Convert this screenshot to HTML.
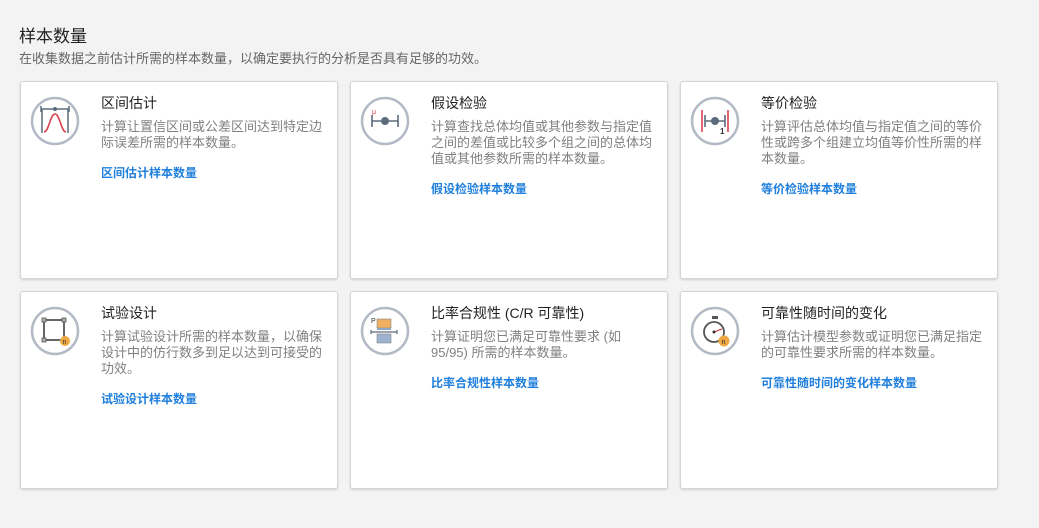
<!DOCTYPE html>
<html><head><meta charset="utf-8"><style>
*{margin:0;padding:0;box-sizing:border-box}
body{width:1039px;height:528px;background:#f3f3f3;font-family:"Liberation Sans","Noto Sans CJK SC",sans-serif;overflow:hidden;position:relative}
h1{position:absolute;left:19px;top:22px;font-size:17px;font-weight:normal;color:#222}
.sub{position:absolute;left:19px;top:48px;font-size:13px;color:#666}
.card{position:absolute;width:318px;height:198px;background:#fff;border:1px solid #d6d6d6;border-radius:3px;box-shadow:0 1px 2px rgba(0,0,0,.15)}
.card svg{position:absolute;left:9px;top:14px}
.t{position:absolute;left:80px;top:11px;font-size:14px;color:#222;white-space:nowrap}
.d{position:absolute;left:80px;top:37px;width:224px;font-size:13px;line-height:16px;color:#808080}
.l{display:block;margin-top:14px;color:#1f7fdc;font-weight:bold;font-size:12px}
</style></head><body>
<h1>样本数量</h1>
<div class="sub">在收集数据之前估计所需的样本数量，以确定要执行的分析是否具有足够的功效。</div>

<div class="card" style="left:20px;top:81px">
<svg width="50" height="50"><circle cx="25" cy="25" r="23" fill="#fff" stroke="#b3bac5" stroke-width="2.5"/>
<path d="M11 13H39M11 10v6M39 10v6M12 13v24M38 13v24" stroke="#5c6b7c" stroke-width="1.5" fill="none"/><circle cx="25" cy="13" r="2" fill="#5c6b7c"/>
<path d="M14 36C19 36 20 18 25 18S31 36 36 36" stroke="#d9424e" stroke-width="1.6" fill="none"/></svg>
<div class="t">区间估计</div>
<div class="d">计算让置信区间或公差区间达到特定边际误差所需的样本数量。<span class="l">区间估计样本数量</span></div></div>

<div class="card" style="left:350px;top:81px">
<svg width="50" height="50"><circle cx="25" cy="25" r="23" fill="#fff" stroke="#b3bac5" stroke-width="2.5"/>
<path d="M12 25H38M12 19v12M38 19v12" stroke="#5c6b7c" stroke-width="1.6"/><circle cx="25" cy="25" r="4" fill="#5c6b7c"/>
<text x="12" y="18" font-size="7" fill="#d9424e" font-family="Liberation Sans">μ</text></svg>
<div class="t">假设检验</div>
<div class="d">计算查找总体均值或其他参数与指定值之间的差值或比较多个组之间的总体均值或其他参数所需的样本数量。<span class="l">假设检验样本数量</span></div></div>

<div class="card" style="left:680px;top:81px">
<svg width="50" height="50"><circle cx="25" cy="25" r="23" fill="#fff" stroke="#b3bac5" stroke-width="2.5"/>
<path d="M12 14v22M38 14v22" stroke="#d9424e" stroke-width="1.6"/><path d="M15 25H35M15 19v12M35 19v12" stroke="#5c6b7c" stroke-width="1.6"/><circle cx="25" cy="25" r="4" fill="#5c6b7c"/>
<text x="30" y="38" font-size="8" font-weight="bold" fill="#333" font-family="Liberation Sans">1</text></svg>
<div class="t">等价检验</div>
<div class="d">计算评估总体均值与指定值之间的等价性或跨多个组建立均值等价性所需的样本数量。<span class="l">等价检验样本数量</span></div></div>

<div class="card" style="left:20px;top:291px">
<svg width="50" height="50"><circle cx="25" cy="25" r="23" fill="#fff" stroke="#b3bac5" stroke-width="2.5"/>
<rect x="14" y="14" width="20" height="20" fill="none" stroke="#333" stroke-width="1.5"/>
<g fill="#aab0a8" stroke="#555" stroke-width=".8"><rect x="12" y="12" width="4" height="4"/><rect x="32" y="12" width="4" height="4"/><rect x="12" y="32" width="4" height="4"/></g>
<circle cx="35" cy="35" r="5" fill="#f0a843"/><text x="32.5" y="38" font-size="7" fill="#333" font-family="Liberation Sans">n</text></svg>
<div class="t">试验设计</div>
<div class="d">计算试验设计所需的样本数量，以确保设计中的仿行数多到足以达到可接受的功效。<span class="l">试验设计样本数量</span></div></div>

<div class="card" style="left:350px;top:291px">
<svg width="50" height="50"><circle cx="25" cy="25" r="23" fill="#fff" stroke="#b3bac5" stroke-width="2.5"/>
<rect x="17" y="13" width="14" height="9" fill="#f0b060" stroke="#888" stroke-width=".6"/>
<rect x="17" y="22" width="14" height="2" fill="#8fa8c8"/>
<path d="M11 26H37M11 24v4M37 24v4" stroke="#5c6b7c" stroke-width="1.2"/>
<rect x="17" y="28" width="14" height="9" fill="#9cb4d0" stroke="#888" stroke-width=".6"/>
<text x="11" y="17" font-size="7" fill="#333" font-family="Liberation Sans">P</text></svg>
<div class="t">比率合规性 (C/R 可靠性)</div>
<div class="d">计算证明您已满足可靠性要求 (如 95/95) 所需的样本数量。<span class="l">比率合规性样本数量</span></div></div>

<div class="card" style="left:680px;top:291px">
<svg width="50" height="50"><circle cx="25" cy="25" r="23" fill="#fff" stroke="#b3bac5" stroke-width="2.5"/>
<rect x="22" y="10" width="6" height="3" fill="#555"/><circle cx="24" cy="26" r="10" fill="#fff" stroke="#555" stroke-width="1.8"/>
<path d="M24 26L32 23" stroke="#c33" stroke-width="1.2"/><circle cx="24" cy="26" r="1.5" fill="#333"/>
<circle cx="34" cy="35" r="5.5" fill="#f0a843"/><text x="31.5" y="38" font-size="7" fill="#333" font-family="Liberation Sans">n</text></svg>
<div class="t">可靠性随时间的变化</div>
<div class="d">计算估计模型参数或证明您已满足指定的可靠性要求所需的样本数量。<span class="l">可靠性随时间的变化样本数量</span></div></div>
</body></html>
